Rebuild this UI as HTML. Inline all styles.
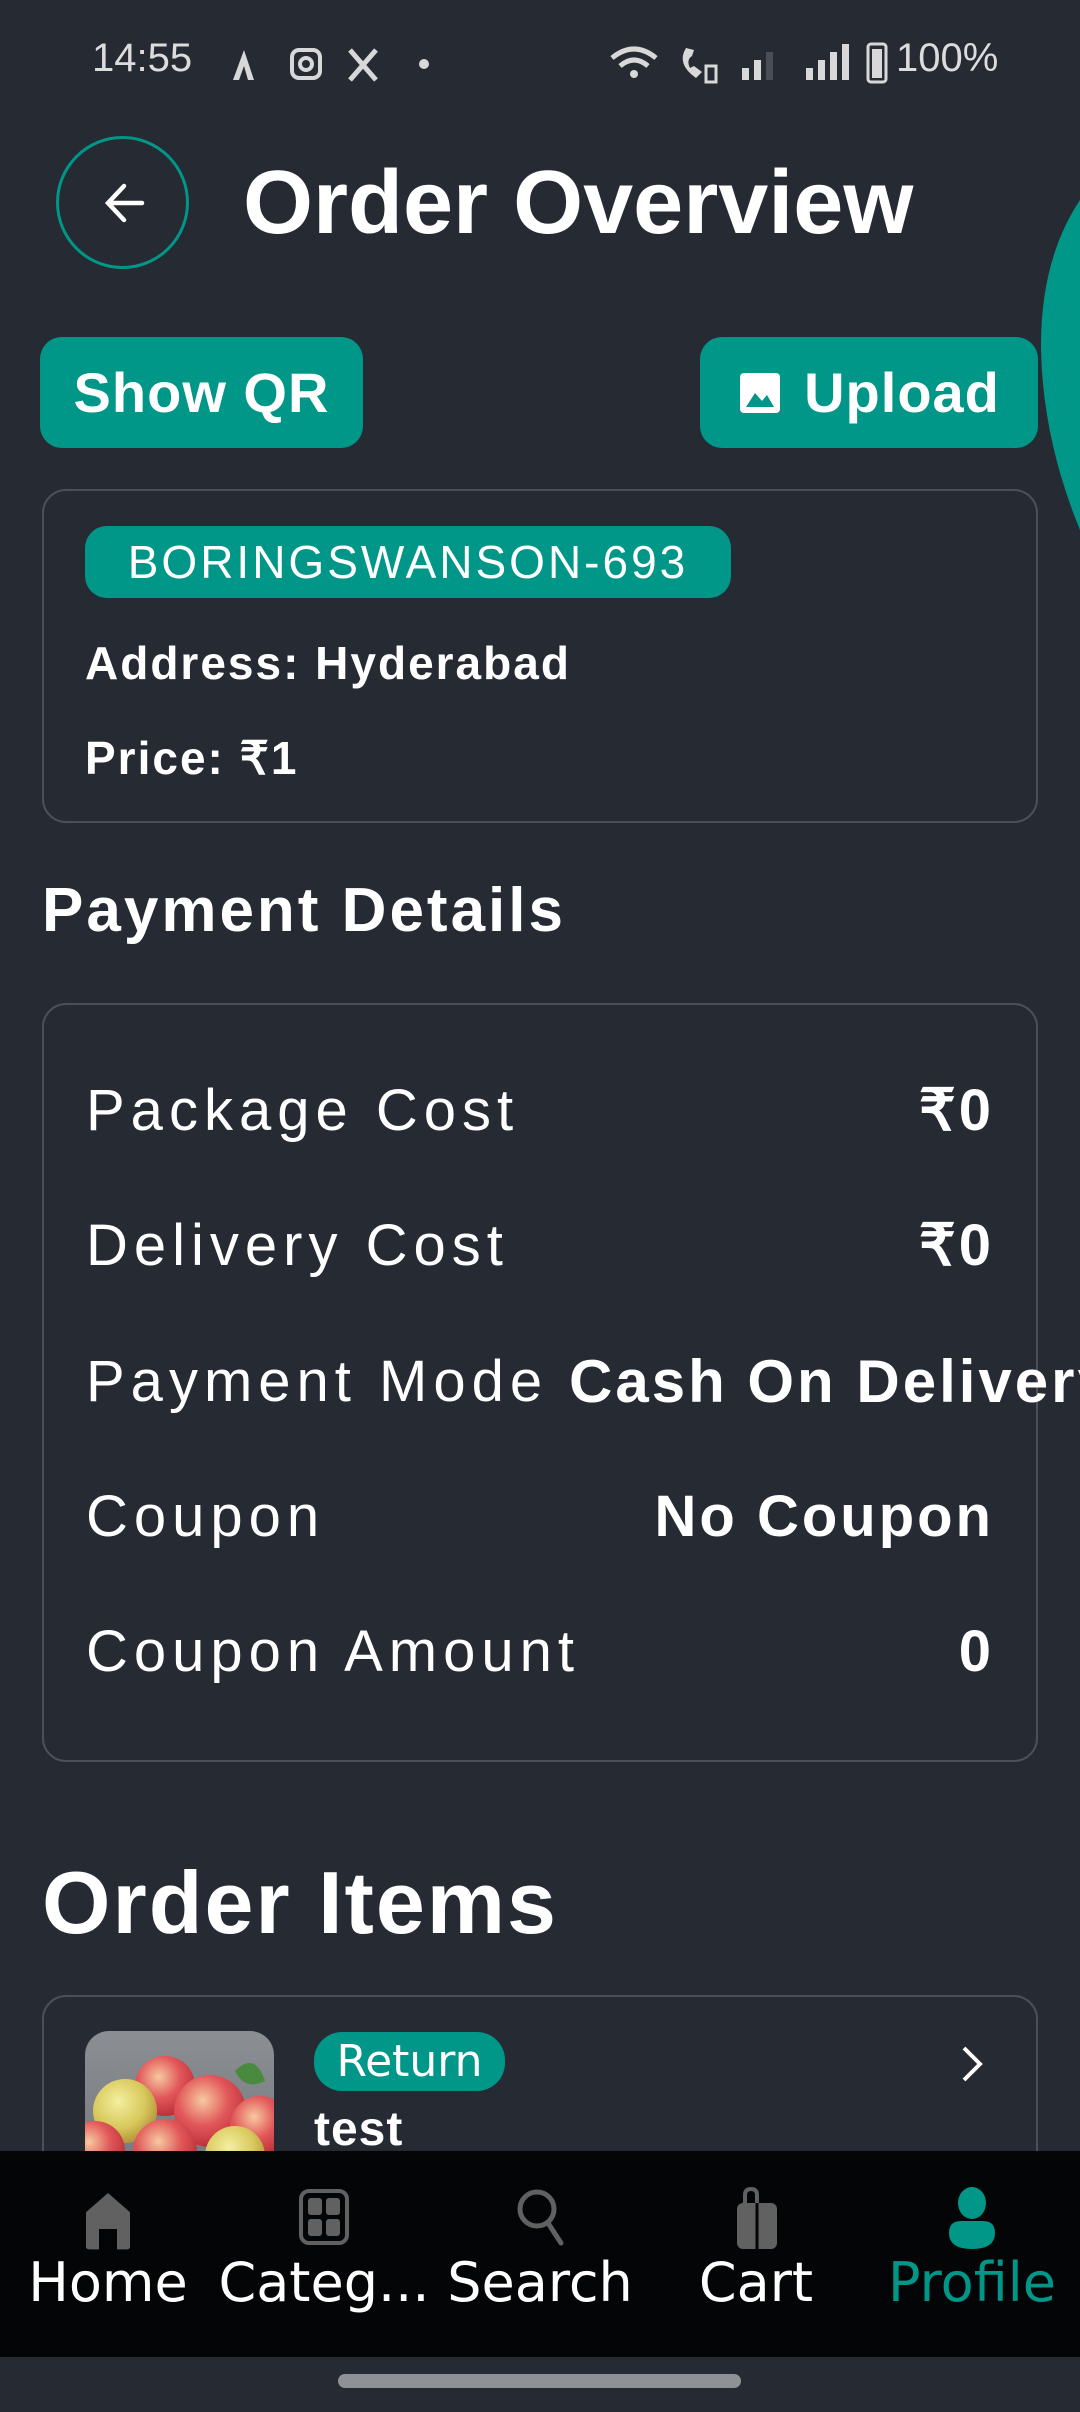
<!DOCTYPE html>
<html><head><meta charset="utf-8"><style>
*{margin:0;padding:0;box-sizing:border-box}
html,body{width:1080px;height:2412px;overflow:hidden;background:#252a33;font-family:"Liberation Sans",sans-serif;color:#fff}
.a{position:absolute;white-space:nowrap}
.c{display:flex;align-items:center}
.card{position:absolute;border:2.5px solid #4b5059;border-radius:24px}
.lbl{position:absolute;left:86px;font-size:58px;font-weight:300;height:80px;line-height:80px;letter-spacing:6px}
.val{position:absolute;right:86px;font-size:58px;font-weight:700;height:80px;line-height:80px;text-align:right;letter-spacing:3px}
.nav{position:absolute;top:2151px;left:0;width:1080px;height:206px;background:#040506}
.ni{position:absolute;top:0;width:216px;text-align:center}
.ni svg{position:absolute;top:36px;left:83px}
.ni span{position:absolute;top:100px;left:0;width:216px;font-family:"DejaVu Sans",sans-serif;font-size:54px;color:#fff;letter-spacing:0px}
</style></head><body>
<!-- status bar -->
<div class="a" style="left:92px;top:36px;font-size:40px;color:#dcdcdc">14:55</div>
<svg class="a" style="left:230px;top:44px" width="200" height="40" viewBox="0 0 200 40">
<path d="M3 36 L14 6 L24 36 L18 36 L14 22 L9 36Z" fill="#d8d8d8"/>
<rect x="62" y="6" width="28" height="28" rx="7" fill="none" stroke="#d8d8d8" stroke-width="4"/><circle cx="76" cy="20" r="6" fill="none" stroke="#d8d8d8" stroke-width="4"/>
<path d="M120 6 L146 36 M146 6 L120 36" stroke="#d8d8d8" stroke-width="5"/>
<circle cx="194" cy="20" r="5" fill="#d8d8d8"/></svg>
<svg class="a" style="left:606px;top:40px" width="400" height="46" viewBox="0 0 400 46">
<path d="M6 18 Q28 0 50 18" stroke="#d8d8d8" stroke-width="5" fill="none"/><path d="M14 26 Q28 14 42 26" stroke="#d8d8d8" stroke-width="5" fill="none"/><circle cx="28" cy="34" r="4" fill="#d8d8d8"/>
<path d="M80 8 Q70 24 90 38 L96 32 L88 26 L84 28 Q80 20 86 16 L88 10Z" fill="#d8d8d8"/><rect x="100" y="26" width="10" height="16" fill="none" stroke="#d8d8d8" stroke-width="3"/>
<rect x="136" y="28" width="7" height="12" fill="#d8d8d8"/><rect x="148" y="20" width="7" height="20" fill="#d8d8d8"/><rect x="160" y="12" width="7" height="28" fill="#4a4f57"/>
<rect x="200" y="28" width="7" height="12" fill="#d8d8d8"/><rect x="212" y="20" width="7" height="20" fill="#d8d8d8"/><rect x="224" y="12" width="7" height="28" fill="#d8d8d8"/><rect x="236" y="4" width="7" height="36" fill="#d8d8d8"/>
<rect x="262" y="4" width="18" height="38" rx="3" fill="none" stroke="#d8d8d8" stroke-width="3"/><rect x="266" y="9" width="10" height="29" fill="#d8d8d8"/></svg>
<div class="a" style="left:896px;top:36px;font-size:40px;color:#dcdcdc">100%</div>
<!-- header -->
<div class="a" style="left:56px;top:136px;width:133px;height:133px;border:3px solid #009688;border-radius:50%"></div>
<svg class="a" style="left:100px;top:180px" width="46" height="46" viewBox="0 0 46 46"><path d="M24 6 L8 23 L24 40 M8 23 H42" stroke="#fff" stroke-width="4.5" fill="none" stroke-linecap="round"/></svg>
<div class="a" style="left:243px;top:148px;font-size:90px;font-weight:700;letter-spacing:0px;line-height:110px">Order Overview</div>
<svg class="a" style="left:1035px;top:200px" width="45" height="330" viewBox="0 0 45 330"><path d="M45 0 Q5 60 6 150 Q8 240 45 330Z" fill="#009688"/></svg>
<div class="a c" style="left:40px;top:337px;width:323px;height:111px;background:#009688;border-radius:22px;justify-content:center;font-size:56px;font-weight:700;letter-spacing:1px">Show QR</div>
<div class="a c" style="left:700px;top:337px;width:338px;height:111px;background:#009688;border-radius:22px;justify-content:center;font-size:56px;font-weight:700;letter-spacing:1px"><svg width="44" height="44" viewBox="0 0 44 44" style="margin-right:22px"><rect x="2" y="2" width="40" height="40" rx="4" fill="#fff"/><path d="M8 36 L17 22 L24 30 L29 24 L36 36Z" fill="#009688"/></svg>Upload</div>
<!-- card 1 -->
<div class="card" style="left:42px;top:489px;width:996px;height:334px"></div>
<div class="a c" style="left:85px;top:526px;width:646px;height:72px;background:#009688;border-radius:22px;justify-content:center;font-size:46px;letter-spacing:3px">BORINGSWANSON-693</div>
<div class="a" style="left:85px;top:638px;font-size:46px;font-weight:700;line-height:50px;letter-spacing:2px">Address: Hyderabad</div>
<div class="a" style="left:85px;top:733px;font-size:46px;font-weight:700;line-height:50px;letter-spacing:2px">Price: ₹1</div>
<div class="a" style="left:42px;top:876px;font-size:62px;font-weight:700;line-height:70px;letter-spacing:3px">Payment Details</div>
<!-- card 2 -->
<div class="card" style="left:42px;top:1003px;width:996px;height:759px"></div>
<div class="lbl" style="top:1071px">Package Cost</div><div class="val" style="top:1071px">₹0</div>
<div class="lbl" style="top:1206px">Delivery Cost</div><div class="val" style="top:1206px">₹0</div>
<div class="lbl" style="top:1342px">Payment Mode</div><div class="a" style="left:569px;top:1342px;font-size:60px;font-weight:700;line-height:80px;letter-spacing:3px">Cash On Delivery</div>
<div class="lbl" style="top:1477px">Coupon</div><div class="val" style="top:1477px">No Coupon</div>
<div class="lbl" style="top:1612px">Coupon Amount</div><div class="val" style="top:1612px">0</div>
<div class="a" style="left:42px;top:1850px;font-size:88px;font-weight:700;line-height:106px;letter-spacing:2px">Order Items</div>
<!-- item card -->
<div class="card" style="left:42px;top:1995px;width:996px;height:260px"></div>
<svg class="a" style="left:85px;top:2031px" width="189" height="130" viewBox="0 0 189 130"><defs><clipPath id="cp"><rect width="189" height="200" rx="24"/></clipPath>
<radialGradient id="r" cx=".4" cy=".35" r=".7"><stop offset="0" stop-color="#f7c9a0"/><stop offset=".5" stop-color="#e2585a"/><stop offset="1" stop-color="#b82a35"/></radialGradient>
<radialGradient id="y" cx=".4" cy=".35" r=".7"><stop offset="0" stop-color="#f4efa0"/><stop offset=".6" stop-color="#d7c85a"/><stop offset="1" stop-color="#b08a3a"/></radialGradient>
<linearGradient id="bg" x1="0" y1="0" x2="0" y2="1"><stop offset="0" stop-color="#8b8e93"/><stop offset="1" stop-color="#6d7075"/></linearGradient></defs>
<g clip-path="url(#cp)"><rect width="189" height="200" fill="url(#bg)"/>
<path d="M30 60 Q50 40 70 70 Q40 80 30 60Z" fill="#3d7a3a"/><path d="M150 40 Q170 20 180 50 Q160 60 150 40Z" fill="#4a8a3e"/>
<circle cx="80" cy="55" r="30" fill="url(#r)"/><circle cx="40" cy="80" r="32" fill="url(#y)"/><circle cx="125" cy="80" r="36" fill="url(#r)"/>
<circle cx="175" cy="95" r="30" fill="url(#r)"/><circle cx="10" cy="120" r="30" fill="url(#r)"/><circle cx="80" cy="120" r="32" fill="url(#r)"/><circle cx="150" cy="125" r="30" fill="url(#y)"/></g></svg>
<div class="a c" style="left:314px;top:2032px;width:191px;height:59px;background:#009688;border-radius:28px;justify-content:center;font-family:'DejaVu Sans',sans-serif;font-size:44px">Return</div>
<div class="a" style="left:314px;top:2100px;font-size:48px;font-weight:700;line-height:60px;letter-spacing:1px">test</div>
<svg class="a" style="left:958px;top:2044px" width="30" height="40" viewBox="0 0 30 40"><path d="M6 4 L22 20 L6 36" stroke="#fff" stroke-width="4" fill="none"/></svg>
<!-- nav -->
<div class="nav">
<div class="ni" style="left:0"><svg width="50" height="110" viewBox="0 0 50 110"><path d="M3 42 L25 10 L47 42 L47 100 Q47 104 43 104 L34 104 L34 70 L16 70 L16 104 L7 104 Q3 104 3 100Z" fill="#616161" transform="scale(1 0.6)"/></svg><span>Home</span></div>
<div class="ni" style="left:216px"><svg width="50" height="60" viewBox="0 0 50 60"><rect x="2" y="4" width="46" height="52" rx="8" fill="none" stroke="#616161" stroke-width="4"/><rect x="9" y="11" width="14" height="17" rx="3" fill="#616161"/><rect x="27" y="11" width="14" height="17" rx="3" fill="#616161"/><rect x="9" y="32" width="14" height="17" rx="3" fill="#616161"/><rect x="27" y="32" width="14" height="17" rx="3" fill="#616161"/></svg><span>Categ...</span></div>
<div class="ni" style="left:432px"><svg width="50" height="60" viewBox="0 0 50 60"><circle cx="22" cy="22" r="17" fill="none" stroke="#616161" stroke-width="5"/><path d="M33 36 L46 56" stroke="#616161" stroke-width="5" stroke-linecap="round"/></svg><span>Search</span></div>
<div class="ni" style="left:648px"><svg width="50" height="64" viewBox="0 0 50 64"><path d="M14 16 V8 Q14 2 20 2 Q26 2 26 8 V16" stroke="#616161" stroke-width="4" fill="none"/><rect x="6" y="16" width="40" height="46" rx="6" fill="#616161"/><path d="M26 16 V62" stroke="#040506" stroke-width="3"/></svg><span>Cart</span></div>
<div class="ni" style="left:864px"><svg width="50" height="64" viewBox="0 0 50 64"><ellipse cx="25" cy="16" rx="14" ry="16" fill="#009688"/><path d="M2 46 Q2 34 14 34 L36 34 Q48 34 48 46 Q48 62 25 62 Q2 62 2 46Z" fill="#009688"/></svg><span style="color:#009688">Profile</span></div>
</div>
<div class="a" style="left:338px;top:2374px;width:403px;height:14px;border-radius:7px;background:#8e9196"></div>
</body></html>
